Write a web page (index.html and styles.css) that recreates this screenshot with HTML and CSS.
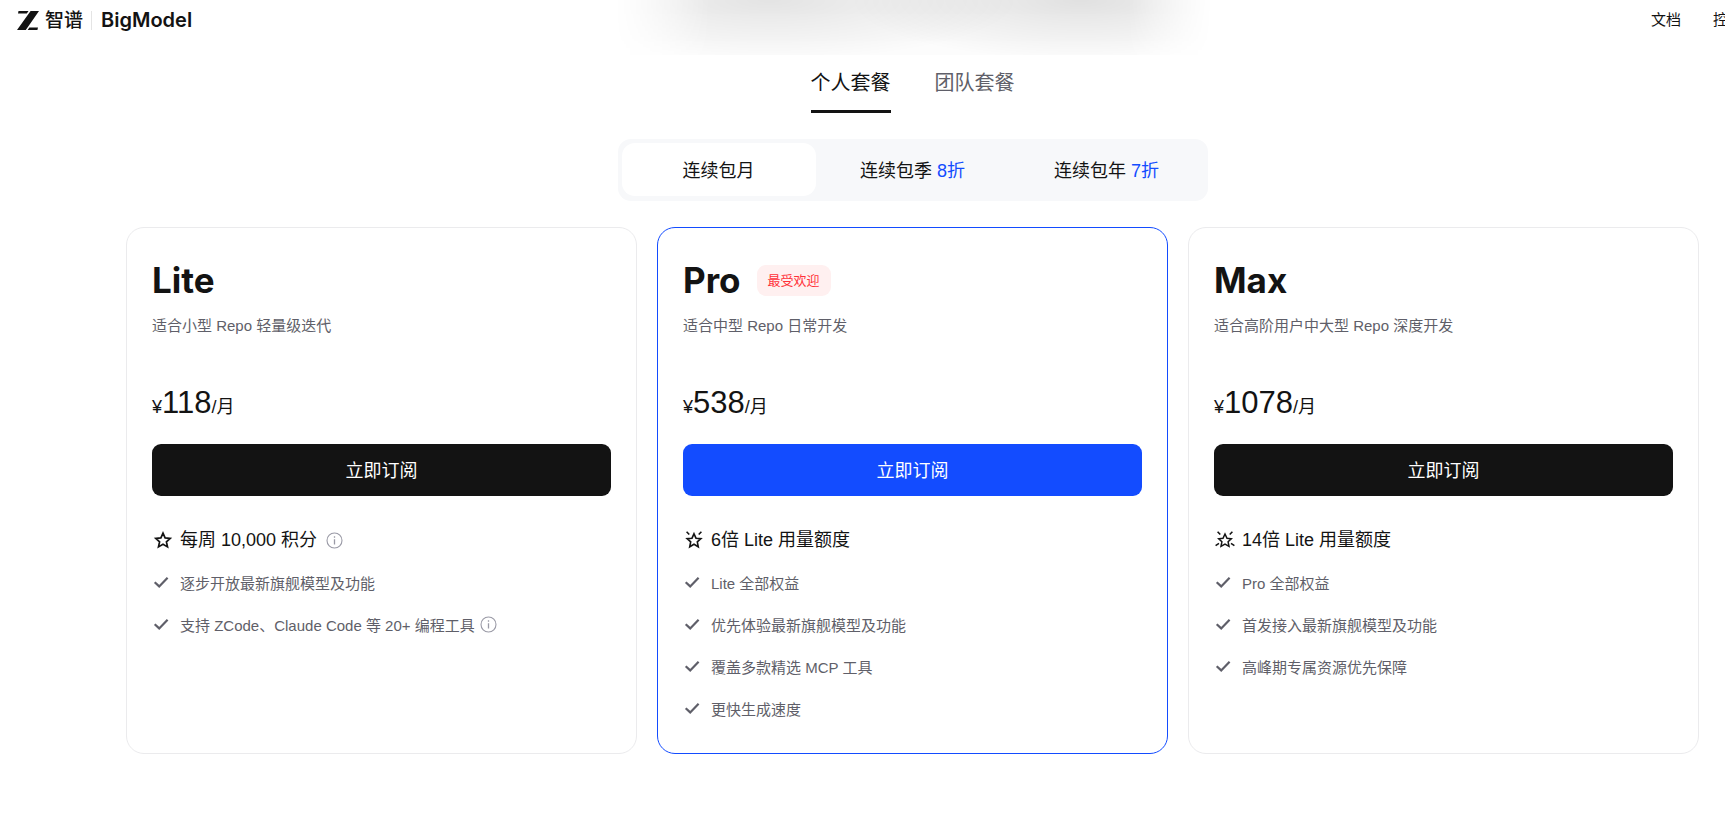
FILE: index.html
```html
<!DOCTYPE html>
<html lang="zh-CN">
<head>
    <meta charset="UTF-8">
    <meta name="viewport" content="width=device-width, initial-scale=1.0">
    <title>智谱 BigModel</title>

    <link rel="stylesheet" href="styles.css">
</head>
<body>

    <svg class="sprite" aria-hidden="true">
        <symbol id="check" viewBox="0 0 18 18">
            <path d="M2.7 9.2 L7.2 13.4 L15.6 4.7" fill="none" stroke="currentColor" stroke-width="2.2"/>
        </symbol>
        <symbol id="info" viewBox="0 0 17 17">
            <circle cx="8.5" cy="8.5" r="7.5" fill="none" stroke="currentColor" stroke-width="1.1"/>
            <path d="M8.5 7.2 V12.6 M8.5 4.3 V5.7" stroke="currentColor" stroke-width="1.3"/>
        </symbol>
        <symbol id="star" viewBox="0 0 22 22">
            <path d="M11 4.2 L13.1 8.9 L18.2 9.4 L14.4 12.8 L15.5 17.9 L11 15.3 L6.5 17.9 L7.6 12.8 L3.8 9.4 L8.9 8.9 Z" fill="none" stroke="currentColor" stroke-width="1.7"/>
        </symbol>
        <symbol id="star-rays" viewBox="0 0 22 22">
            <path d="M11 4.8 L13 9.2 L17.9 9.7 L14.3 12.9 L15.3 17.8 L11 15.3 L6.7 17.8 L7.7 12.9 L4.1 9.7 L9 9.2 Z" fill="none" stroke="currentColor" stroke-width="1.6"/>
            <path d="M3.6 2.8 L6.3 5.5 M18.4 2.8 L15.7 5.5" stroke="currentColor" stroke-width="1.6"/>
        </symbol>
        <symbol id="star-burst" viewBox="0 0 22 22">
            <path d="M11 5 L13 9.3 L17.3 9.8 L14.1 12.8 L15 17.3 L11 15.1 L7 17.3 L7.9 12.8 L4.7 9.8 L9 9.3 Z" fill="none" stroke="currentColor" stroke-width="1.5"/>
            <path d="M3.6 2.8 L6.3 5.5 M18.4 2.8 L15.7 5.5 M1.6 16.6 L5 14.4 M20.4 16.6 L17 14.4" stroke="currentColor" stroke-width="1.6"/>
        </symbol>
    </svg>

    <header class="my-header">
        <a class="logo" href="#">
            <svg width="22" height="19" viewBox="0 0 22 19" aria-hidden="true">
                <path d="M1.5 0 H11.5 L9.8 2.6 H1 Z M13.6 0 H22 L8.8 19 H0 Z M12.4 16.4 H21 L20.4 19 H10.6 Z" fill="#131313"/>
            </svg>
            <span class="logo-cn">智谱</span>
            <span class="logo-en">BigModel</span>
        </a>
        <nav class="nav">
            <a href="#">文档</a>
            <a href="#">控制台</a>
        </nav>
    </header>

    <main class="plans">
        <div class="hero-shadow"></div>

        <div class="tabs">
            <button class="tab active">个人套餐</button>
            <button class="tab">团队套餐</button>
        </div>

        <div class="period">
            <button class="period-btn active">连续包月</button>
            <button class="period-btn">连续包季 <span>8折</span></button>
            <button class="period-btn">连续包年 <span>7折</span></button>
        </div>

        <div class="cards">
            <section class="card">
                <div class="card-title"><h2>Lite</h2></div>
                <p class="desc">适合小型 Repo 轻量级迭代</p>
                <p class="price">¥<strong>118</strong>/月</p>
                <button class="buy-btn">立即订阅</button>
                <div class="quota">
                    <svg class="star"><use href="#star"/></svg>
                    <span>每周 10,000 积分</span>
                    <svg class="info"><use href="#info"/></svg>
                </div>
                <ul class="features">
                    <li><svg class="check"><use href="#check"/></svg>逐步开放最新旗舰模型及功能</li>
                    <li><svg class="check"><use href="#check"/></svg>支持 ZCode、Claude Code 等 20+ 编程工具<svg class="info"><use href="#info"/></svg></li>
                </ul>
            </section>

            <section class="card popular">
                <div class="card-title"><h2>Pro</h2><span class="badge">最受欢迎</span></div>
                <p class="desc">适合中型 Repo 日常开发</p>
                <p class="price">¥<strong>538</strong>/月</p>
                <button class="buy-btn">立即订阅</button>
                <div class="quota">
                    <svg class="star"><use href="#star-rays"/></svg>
                    <span>6倍 Lite 用量额度</span>
                </div>
                <ul class="features">
                    <li><svg class="check"><use href="#check"/></svg>Lite 全部权益</li>
                    <li><svg class="check"><use href="#check"/></svg>优先体验最新旗舰模型及功能</li>
                    <li><svg class="check"><use href="#check"/></svg>覆盖多款精选 MCP 工具</li>
                    <li><svg class="check"><use href="#check"/></svg>更快生成速度</li>
                </ul>
            </section>

            <section class="card">
                <div class="card-title"><h2>Max</h2></div>
                <p class="desc">适合高阶用户中大型 Repo 深度开发</p>
                <p class="price">¥<strong>1078</strong>/月</p>
                <button class="buy-btn">立即订阅</button>
                <div class="quota">
                    <svg class="star"><use href="#star-burst"/></svg>
                    <span>14倍 Lite 用量额度</span>
                </div>
                <ul class="features">
                    <li><svg class="check"><use href="#check"/></svg>Pro 全部权益</li>
                    <li><svg class="check"><use href="#check"/></svg>首发接入最新旗舰模型及功能</li>
                    <li><svg class="check"><use href="#check"/></svg>高峰期专属资源优先保障</li>
                </ul>
            </section>
        </div>
    </main>

</body>
</html>
```

FILE: styles.css
```css
* {
    box-sizing: border-box;
    margin: 0;
    padding: 0;
}

body {
    background-color: #fff;
    color: #131313;
    font-family: "Liberation Sans", "Noto Sans CJK SC", sans-serif;
    font-size: 15px;
}

button {
    border: none;
    background: none;
    color: inherit;
    font: inherit;
    cursor: pointer;
}

a {
    color: inherit;
    text-decoration: none;
}

.sprite {
    display: none;
}

/* header lies over the page */
.my-header {
    position: absolute;
    top: 0;
    left: 0;
    right: 0;
    z-index: 1;
    display: flex;
    justify-content: space-between;
    align-items: center;
    height: 40px;
    padding-left: 17px;
}

.logo {
    display: flex;
    align-items: center;
}

.logo-cn {
    margin-left: 6px;
    padding-right: 8px;
    border-right: 1px solid #e4e4e4;
    font-size: 19px;
    line-height: 19px;
    font-weight: 500;
}

.logo-en {
    margin-left: 9px;
    font-family: Inter, sans-serif;
    font-size: 20px;
    font-weight: 600;
}

.nav {
    display: flex;
    gap: 32px;
    width: 74px;
    padding-bottom: 4px;
    overflow: hidden;
    white-space: nowrap;
}

.nav a {
    flex: none;
}

.plans {
    display: flex;
    flex-direction: column;
    align-items: center;
    padding: 0 26px 65px 126px;
}

.hero-shadow {
    width: 598px;
    height: 55px;
    background:
        radial-gradient(ellipse 250px 60px at 26% 0, rgba(0, 0, 0, 0.09), transparent),
        radial-gradient(ellipse 230px 60px at 78% 0, rgba(0, 0, 0, 0.1), transparent),
        linear-gradient(rgba(0, 0, 0, 0.02), rgba(0, 0, 0, 0.01));
    -webkit-mask-image: linear-gradient(90deg, transparent, #000 16%, #000 86%, transparent);
    mask-image: linear-gradient(90deg, transparent, #000 16%, #000 86%, transparent);
}

.tabs {
    display: flex;
    gap: 44px;
}

.tab {
    height: 58px;
    padding-bottom: 2px;
    border-bottom: 3px solid transparent;
    font-size: 20px;
    color: #5f5f69;
}

.tab.active {
    border-color: #131313;
    color: #131313;
}

.period {
    display: grid;
    grid-template-columns: repeat(3, 194px);
    margin-top: 26px;
    padding: 4px 4px 5px;
    border-radius: 13px;
    background-color: #f7f8fa;
}

.period-btn {
    height: 53px;
    padding-bottom: 2px;
    border-radius: 13px;
    font-size: 18px;
}

.period-btn.active {
    background-color: #fff;
}

.period-btn span {
    color: #134cff;
}

.cards {
    display: grid;
    grid-template-columns: repeat(3, 1fr);
    gap: 20px;
    width: 100%;
    margin-top: 26px;
}

.card {
    padding: 30px 25px 24px;
    border: 1px solid #ebebed;
    border-radius: 18px;
}

.card.popular {
    border-color: #134cff;
}

.card-title {
    display: flex;
    align-items: center;
    gap: 16px;
    height: 44px;
}

.card-title h2 {
    font-family: Inter, sans-serif;
    font-size: 35px;
    font-weight: 700;
}

.badge {
    padding: 0 11px;
    border-radius: 9px;
    background-color: #fff0f0;
    color: #ff3038;
    font-size: 13px;
    line-height: 31px;
}

.desc {
    margin-top: 12px;
    color: #5f5f69;
    line-height: 24px;
}

.price {
    margin-top: 43px;
    font-size: 18px;
    line-height: 44px;
}

.price strong {
    font-size: 31px;
    font-weight: 400;
}

.buy-btn {
    width: 100%;
    height: 52px;
    margin-top: 15px;
    padding-bottom: 2px;
    border-radius: 9px;
    background-color: #131313;
    color: #fff;
    font-size: 18px;
}

.popular .buy-btn {
    background-color: #134cff;
}

.quota {
    display: flex;
    align-items: center;
    margin-top: 31px;
    font-size: 18px;
    line-height: 26px;
}

.star {
    width: 22px;
    height: 22px;
    margin-right: 6px;
}

.info {
    width: 17px;
    height: 17px;
    color: #9a9aa6;
}

.quota .info {
    margin-left: 9px;
}

.features {
    list-style: none;
    margin-top: 8px;
    color: #5f5f69;
}

.features li {
    display: flex;
    align-items: center;
    height: 42px;
}

.check {
    width: 18px;
    height: 18px;
    margin-right: 10px;
}

.features .info {
    margin-left: 5px;
}
```
